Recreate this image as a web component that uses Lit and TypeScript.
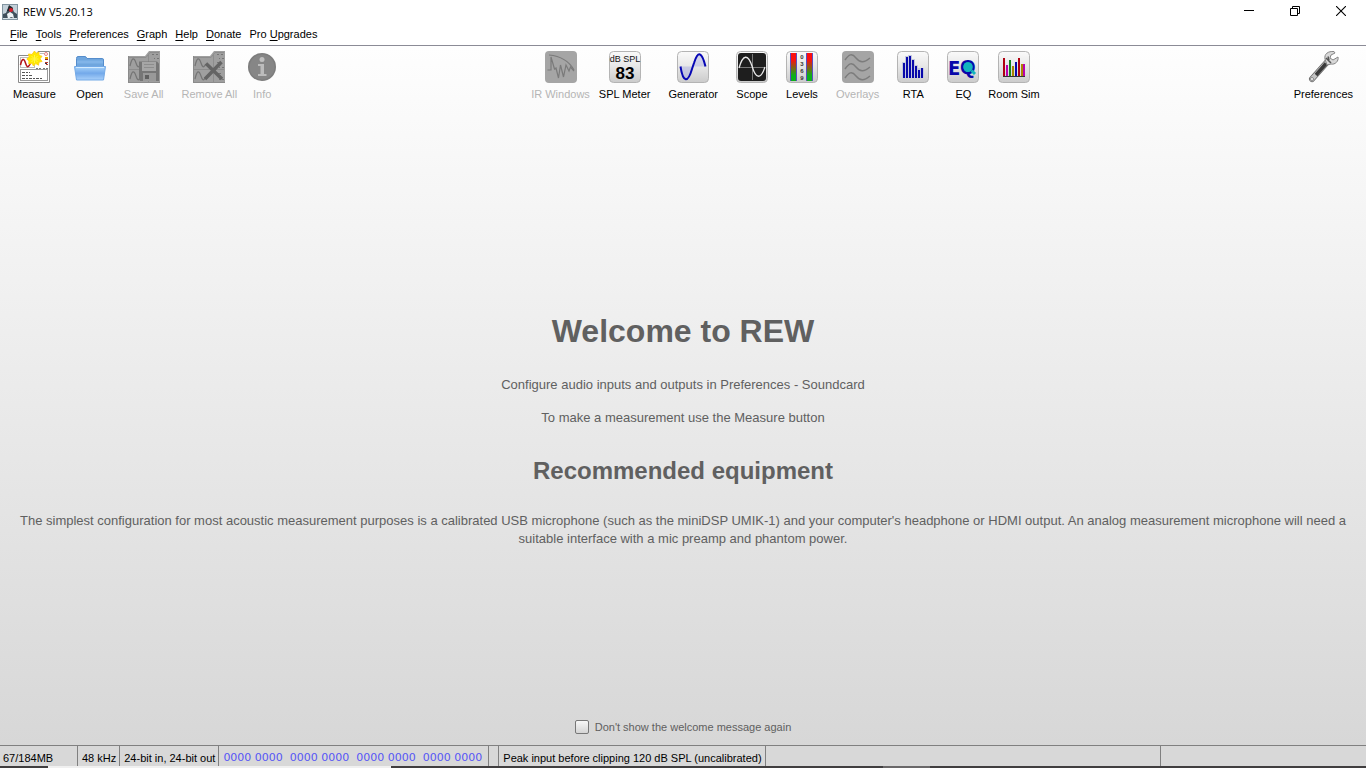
import { LitElement, html, svg, css, SVGTemplateResult } from "lit";
import { customElement, state } from "lit/decorators.js";

interface Tool {
  label: string;
  icon: SVGTemplateResult;
  disabled?: boolean;
  tight?: boolean;
}

const tile = svg`<rect x=".5" y=".5" width="31" height="31" rx="4" fill="url(#tile)" stroke="#b4b4b4"/>`;
const flatTile = svg`<rect x="0" y="0" width="32" height="32" rx="4" fill="#a5a5a5"/>`;

const greySheets = svg`
  <path d="M0 5H17L21 0H32V32H0Z" fill="#9f9f9f"/>
  <path d="M1 6.5H18L22 1.5H31M1 18.5H31M20.5 4V31" fill="none" stroke="#8d8d8d"/>
  <path d="M2 15C4 6 6 6 8 12S11 16 13 13M2 28C4 19 6 19 8 25S11 29 13 26" fill="none" stroke="#757575" stroke-width="1.2"/>
  <path d="M24 3.5h2M28 3.5h2M26 7.5h1M29 7.5h2M24 11.5h3M26 16.5h1M29 16.5h2M25 22.5h3M26 28.5h1M29 28.5h2" stroke="#757575"/>
  <path d="M.5 5V31.5M0 31.5H32" stroke="#8b8b8b"/>`;

const icons = {
  measure: svg`
    <path d="M.5 4.5H17L20 .5H31.5V31.5H.5Z" fill="#fff" stroke="#8a8a8a"/>
    <rect x="2.5" y="6.5" width="14" height="10" fill="#fff" stroke="#bbb"/>
    <path d="M2.5 14C4 7 6 7 7.5 12S10.5 17 13 11" fill="none" stroke="#b51218" stroke-width="1.5"/>
    <rect x="2.5" y="18.5" width="27" height="11" fill="#fff" stroke="#999"/>
    <path d="M4 21.5h8M4 24.5h11M4 27.5h21" stroke="#555" stroke-dasharray="3 1 2 1"/>
    <path d="M18 17.5h6M25 17.5h5" stroke="#777" stroke-dasharray="2 1"/>
    <circle cx="28" cy="3" r="1.5" fill="#fff" stroke="#e98080"/>
    <path d="M22 2.5h4" stroke="#bbb"/>
    <rect x="27" y="6" width="3" height="3" fill="#eba900"/><path d="M27 8.5h3" stroke="#9b2320"/>
    <path d="M27 11.5h3M28 13.5h2" stroke="#c0392b"/><path d="M27 12.5h2" stroke="#334"/>
    <path d="M16.5 0 18 2.5 21 1.2 21 4.5 24 5.2 22 7.8 24 10.5 21 11 20.5 14.2 17.8 12.5 15.5 15 14 12 10.8 13 11 10 8.8 8 11.2 6 10.5 3 14 3.5Z" fill="#ffe900" stroke="#ffd21a"/>
    <path d="M16.5 4v8M12.5 8h8M13.5 5l6 6M19.5 5l-6 6" stroke="#fff64a"/>`,
  open: svg`
    <path d="M2.5 16V7.5Q2.5 5.5 4 5.5H11Q12 5.5 13 7.5H28.5Q29.5 7.5 29.5 9V16Z" fill="#6fa6de" stroke="#558dcc"/>
    <path d="M3 11H29" stroke="#81b4e8" stroke-width="3"/>
    <path d="M.5 15.5H31.5L29.5 29H2.5Z" fill="url(#folder)" stroke="#73a9e6"/>
    <path d="M2 16.5H30" stroke="#d2ebff"/>`,
  saveAll: svg`${greySheets}
    <path d="M11 10.5H29L31 12.5V30H12L11 28Z" fill="#767676"/>
    <rect x="14" y="11" width="14" height="9" fill="#a6a6a6"/><path d="M16 13.5h10M16 16.5h10" stroke="#8d8d8d"/>
    <rect x="15" y="22" width="13" height="8" fill="#999"/><rect x="17" y="24" width="4" height="4" fill="#606060"/>`,
  removeAll: svg`${greySheets}
    <path d="M13 12.5 29 28M28.5 11 12 28" stroke="#646464" stroke-width="3.5"/>`,
  info: svg`
    <circle cx="16" cy="16" r="14" fill="#7d7d7d"/><circle cx="16" cy="16" r="12.5" fill="#868686"/>
    <circle cx="16" cy="8.5" r="2.5" fill="#c0c0c0"/>
    <path d="M12 13H18V23H20.5V25H12V23H14.5V15H12Z" fill="#bcbcbc"/>`,
  ir: svg`${flatTile}
    <path d="M4 4C15 5 24 10 29 19" fill="none" stroke="#7a7a7a" stroke-width="1.2"/>
    <path d="M2.5 19H6V6L9.5 18 11 17 13.5 27 15.5 14 18.5 26 21 14 24 20 25.5 16 29 20" fill="none" stroke="#7a7a7a" stroke-width="1.2"/>`,
  spl: svg`${tile}
    <text x="16" y="11" text-anchor="middle" font-size="9" fill="#111">dB SPL</text>
    <text x="16" y="28" text-anchor="middle" font-size="17" font-weight="700" fill="#000">83</text>`,
  generator: svg`${tile}
    <path d="M4 15.5H28C26 2 21 -1 17 10L15 19C11 33 6 30 4 15.5Z" fill="#9da3e0" opacity=".4"/>
    <path d="M3.5 15.5C6 32 11 32 15 18L17 12C21 -1 25 1 28.5 15.5" fill="none" stroke="#0606b4" stroke-width="2"/>`,
  scope: svg`${tile}
    <rect x="2" y="2" width="28" height="28" rx="3" fill="#1e1e1e"/>
    <path d="M16.5 3V29M3 16.5H29" stroke="#777"/>
    <path d="M3 17C7 3 12 3 16 15C20 29 25 28 29 16" fill="none" stroke="#e9e9e9" stroke-width="1.3"/>`,
  levels: svg`${tile}
    <rect x="5" y="2" width="6" height="28" fill="url(#level)"/><path d="M4.5 2V30M10.5 2V30" stroke="#5a4cc4"/>
    <rect x="21" y="2" width="6" height="28" fill="url(#level)"/><path d="M20.5 2V30M26.5 2V30" stroke="#5a4cc4"/>
    <g font-size="6" font-weight="700" text-anchor="middle" fill="#333"><text x="16" y="8">0</text><text x="16" y="15">3</text><text x="16" y="22">6</text><text x="16" y="29">9</text></g>`,
  overlays: svg`${flatTile}
    <path d="M3 9C7 3 10 2 14 7S22 12 28 7M3 18C7 12 10 11 14 16S22 21 28 16M3 27C7 21 10 20 14 25S22 30 28 25" fill="none" stroke="#7c7c7c" stroke-width="1.4"/>`,
  rta: svg`${tile}
    <path d="M5 27V11H8V5H11V4H15V8H18V14H21V17H27V27Z" fill="#c4c9dd"/>
    <path d="M7 27V12M10 27V6M13 27V5M16 27V9M19 27V15M22 27V19M25 27V17" stroke="#0808aa" stroke-width="2"/>`,
  eq: svg`${tile}
    <circle cx="21" cy="16" r="6" fill="#14b4bd"/>
    <text class="letter-e" x="1" y="24">E</text>
    <text class="letter-q" x="13" y="23">Q</text>
    <circle cx="21" cy="16" r="4.8" fill="#14b4bd"/>
    <path d="M24.5 19.5 28 23" stroke="#14b4bd" stroke-width="3"/>`,
  room: svg`${tile}
    <g stroke-width="2"><path d="M6 25V7M21 25V7" stroke="#b00010"/><path d="M9 25V14M26 25V13" stroke="#b800ae"/><path d="M12 25V9" stroke="#13851f"/><path d="M15 25V15M24 25V13" stroke="#aa8500"/><path d="M18 25V11" stroke="#0808aa"/></g>
    <path d="M5 25.5H27" stroke="#333"/>`,
  wrench: svg`
    <path d="M5 28 21 10" stroke="#666" stroke-width="6" stroke-linecap="round"/>
    <path d="M5 28 21 10" stroke="#c4c4c4" stroke-width="4.5" stroke-linecap="round"/>
    <path d="M9 24 19 12.5" stroke="#3a3a3a" stroke-width="3.5"/>
    <path d="M18 8C17 3 21 0 27 .5L28 2 24 4 23 7 26 9 31 6C32 10 28 14 24 13L20 14Z" fill="#d8d8d8" stroke="#858585"/>
    <path d="M19 7 24 12M21 5.5 22 9" stroke="#555" stroke-width="1.5"/>
    <circle cx="5" cy="28" r="1.5" fill="#fff" stroke="#888"/>`,
};

const fileTools: Tool[] = [
  { label: "Measure", icon: icons.measure },
  { label: "Open", icon: icons.open },
  { label: "Save All", icon: icons.saveAll, disabled: true },
  { label: "Remove All", icon: icons.removeAll, disabled: true },
  { label: "Info", icon: icons.info, disabled: true, tight: true },
];

const viewTools: Tool[] = [
  { label: "IR Windows", icon: icons.ir, disabled: true, tight: true },
  { label: "SPL Meter", icon: icons.spl },
  { label: "Generator", icon: icons.generator },
  { label: "Scope", icon: icons.scope },
  { label: "Levels", icon: icons.levels },
  { label: "Overlays", icon: icons.overlays, disabled: true },
  { label: "RTA", icon: icons.rta },
  { label: "EQ", icon: icons.eq },
  { label: "Room Sim", icon: icons.room, tight: true },
];

const menus: [string, string, string][] = [
  ["", "F", "ile"],
  ["", "T", "ools"],
  ["", "P", "references"],
  ["", "G", "raph"],
  ["", "H", "elp"],
  ["", "D", "onate"],
  ["Pro ", "U", "pgrades"],
];

@customElement("app-root")
export class AppRoot extends LitElement {
  @state() private hideWelcome = false;

  static styles = css`
    :host {
      display: flex;
      flex-direction: column;
      min-height: 100vh;
      font: 11px/14px "Liberation Sans", Arial, sans-serif;
      color: #000;
      background: #fff;
    }
    * { box-sizing: border-box; }
    button { font: inherit; color: inherit; background: none; border: 0; padding: 0; }
    .defs { display: block; width: 0; height: 0; }
    .titlebar { display: flex; align-items: center; height: 23px; padding: 0 2px; gap: 5px; }
    .title { flex: 1; font: 11px/16px "Open Sans", "Noto Sans", sans-serif; }
    .app-icon { width: 16px; height: 16px; }
    .controls { display: flex; align-self: stretch; }
    .control { width: 46px; display: grid; place-items: center; padding-bottom: 2px; }
    .menubar { display: flex; align-items: center; gap: 8px; height: 23px; padding: 0 10px; border-bottom: 1px solid #8b8b96; }
    .menu u { text-underline-offset: 2px; }
    .client { flex: 1; display: flex; flex-direction: column; background: linear-gradient(#fefefe, #d7d7d7); }
    .toolbar { display: flex; justify-content: space-between; padding: 5px 4px 4px; }
    .group { display: flex; }
    .file-group { padding-right: 8px; }
    .tool { display: flex; flex-direction: column; align-items: center; gap: 4px; padding: 0 9px; white-space: nowrap; }
    .tool.tight { padding: 0; }
    .tool:disabled { color: #b5b5b5; }
    .tool svg { width: 32px; height: 32px; }
    .letter-e { font: bold 20px "DejaVu Sans Condensed", "DejaVu Sans", sans-serif; fill: #0808aa; }
    .letter-q { font: bold 20px "Liberation Sans", Arial, sans-serif; fill: #0808aa; }
    .welcome { flex: 1; display: flex; flex-direction: column; align-items: center; justify-content: center; padding: 35px 12px 0; color: #606060; text-align: center; font-size: 13px; line-height: 18px; }
    h1 { margin: 0 0 26px; font-size: 32px; line-height: 38px; }
    h2 { margin: 30px 0 27px; font-size: 24px; line-height: 28px; }
    p { margin: 0; }
    p + p { margin-top: 15px; }
    .dismiss { display: flex; align-items: center; justify-content: center; gap: 6px; color: #606060; padding: 0 0 11px; }
    .check { appearance: none; width: 14px; height: 14px; margin: 0; border: 1px solid #777; border-radius: 2px; background: linear-gradient(#f7f7f7, #d4d4d4); }
    .check:checked { background: #5b6f93; }
    .status { display: flex; height: 21px; border-top: 1px solid #808080; background: #d8d8d8; white-space: nowrap; }
    .cell { display: flex; align-items: center; padding: 4px 3px 0 4px; border-right: 1px solid #808080; }
    .memory { width: 78px; padding-left: 3px; }
    .bits { font: 11px/14px "DejaVu Sans", sans-serif; color: #5656f5; white-space: pre; padding-right: 6px; }
    .spacer { width: 10px; padding: 0; }
    .stretch { flex: 1; }
    .last { width: 15%; border: 0; }
    .edge { height: 2px; background: linear-gradient(90deg, #403e3f 48px, #f0f0f0 48px 391px, #403e3f 391px 883px, #6a6869 883px 930px, #403e3f 930px); }
  `;

  private tool(t: Tool) {
    return html`<button class="tool ${t.tight ? "tight" : ""}" ?disabled=${t.disabled}>
      <svg viewBox="0 0 32 32" aria-hidden="true">${t.icon}</svg><span>${t.label}</span>
    </button>`;
  }

  render() {
    return html`
      <svg class="defs" aria-hidden="true">
        <defs>
          <linearGradient id="tile" x2="0" y2="1"><stop stop-color="#fafafa"/><stop offset=".45" stop-color="#e8e8e8"/><stop offset="1" stop-color="#cbcbcb"/></linearGradient>
          <linearGradient id="folder" x2="0" y2="1"><stop stop-color="#a8d4fb"/><stop offset=".5" stop-color="#73a9ea"/><stop offset="1" stop-color="#a9d0fa"/></linearGradient>
          <linearGradient id="level" x2="0" y2="1"><stop offset=".25" stop-color="#fb1010"/><stop offset=".8" stop-color="#0cb01b"/></linearGradient>
        </defs>
      </svg>
      <header class="titlebar">
        <svg class="app-icon" viewBox="0 0 16 16" aria-hidden="true">
          <rect x=".5" y=".5" width="15" height="15" fill="#c3d0d9" stroke="#8294a0"/>
          <path d="M1 15V10L4 9 7 2 10 3 12 8 15 10V15Z" fill="#40505c"/>
          <path d="M7 1 11 4 10 7 5 7Z" fill="#24292e"/>
          <path d="M5 10 8 8 11 10 12 14 9 13 6 15Z" fill="#eef3f6"/>
          <circle cx="9" cy="6" r="2" fill="#d81f2c"/>
          <path d="M1 14.5H15" stroke="#d5e0e6"/>
        </svg>
        <span class="title">REW V5.20.13</span>
        <div class="controls">
          <button class="control" aria-label="Minimize"><svg width="10" height="10"><path d="M0 4.5H10" stroke="#000"/></svg></button>
          <button class="control" aria-label="Restore"><svg width="10" height="10" fill="none" stroke="#000"><path d="M.5 2.5H7.5V9.5H.5ZM2.5 2.5V.5H9.5V7.5H7.5"/></svg></button>
          <button class="control" aria-label="Close"><svg width="10" height="10"><path d="M0 0 10 10M10 0 0 10" stroke="#000" stroke-width="1.1"/></svg></button>
        </div>
      </header>
      <nav class="menubar">
        ${menus.map(([a, key, b]) => html`<button class="menu">${a}<u>${key}</u>${b}</button>`)}
      </nav>
      <main class="client">
        <div class="toolbar" role="toolbar">
          <div class="group file-group">${fileTools.map((t) => this.tool(t))}</div>
          <div class="group">${viewTools.map((t) => this.tool(t))}</div>
          <div class="group">${this.tool({ label: "Preferences", icon: icons.wrench })}</div>
        </div>
        <section class="welcome">
          <h1>Welcome to REW</h1>
          <p>Configure audio inputs and outputs in Preferences - Soundcard</p>
          <p>To make a measurement use the Measure button</p>
          <h2>Recommended equipment</h2>
          <p>The simplest configuration for most acoustic measurement purposes is a calibrated USB microphone (such as the miniDSP UMIK-1) and your computer's headphone or HDMI output. An analog measurement microphone will need a suitable interface with a mic preamp and phantom power.</p>
        </section>
        <label class="dismiss">
          <input class="check" type="checkbox" .checked=${this.hideWelcome}
            @change=${(e: Event) => (this.hideWelcome = (e.target as HTMLInputElement).checked)} />
          Don't show the welcome message again
        </label>
      </main>
      <footer>
        <div class="status">
          <span class="cell memory">67/184MB</span>
          <span class="cell">48 kHz</span>
          <span class="cell">24-bit in, 24-bit out</span>
          <span class="cell bits">0000 0000  0000 0000  0000 0000  0000 0000</span>
          <span class="cell spacer"></span>
          <span class="cell">Peak input before clipping 120 dB SPL (uncalibrated)</span>
          <span class="cell stretch"></span>
          <span class="cell last"></span>
        </div>
        <div class="edge"></div>
      </footer>
    `;
  }
}
